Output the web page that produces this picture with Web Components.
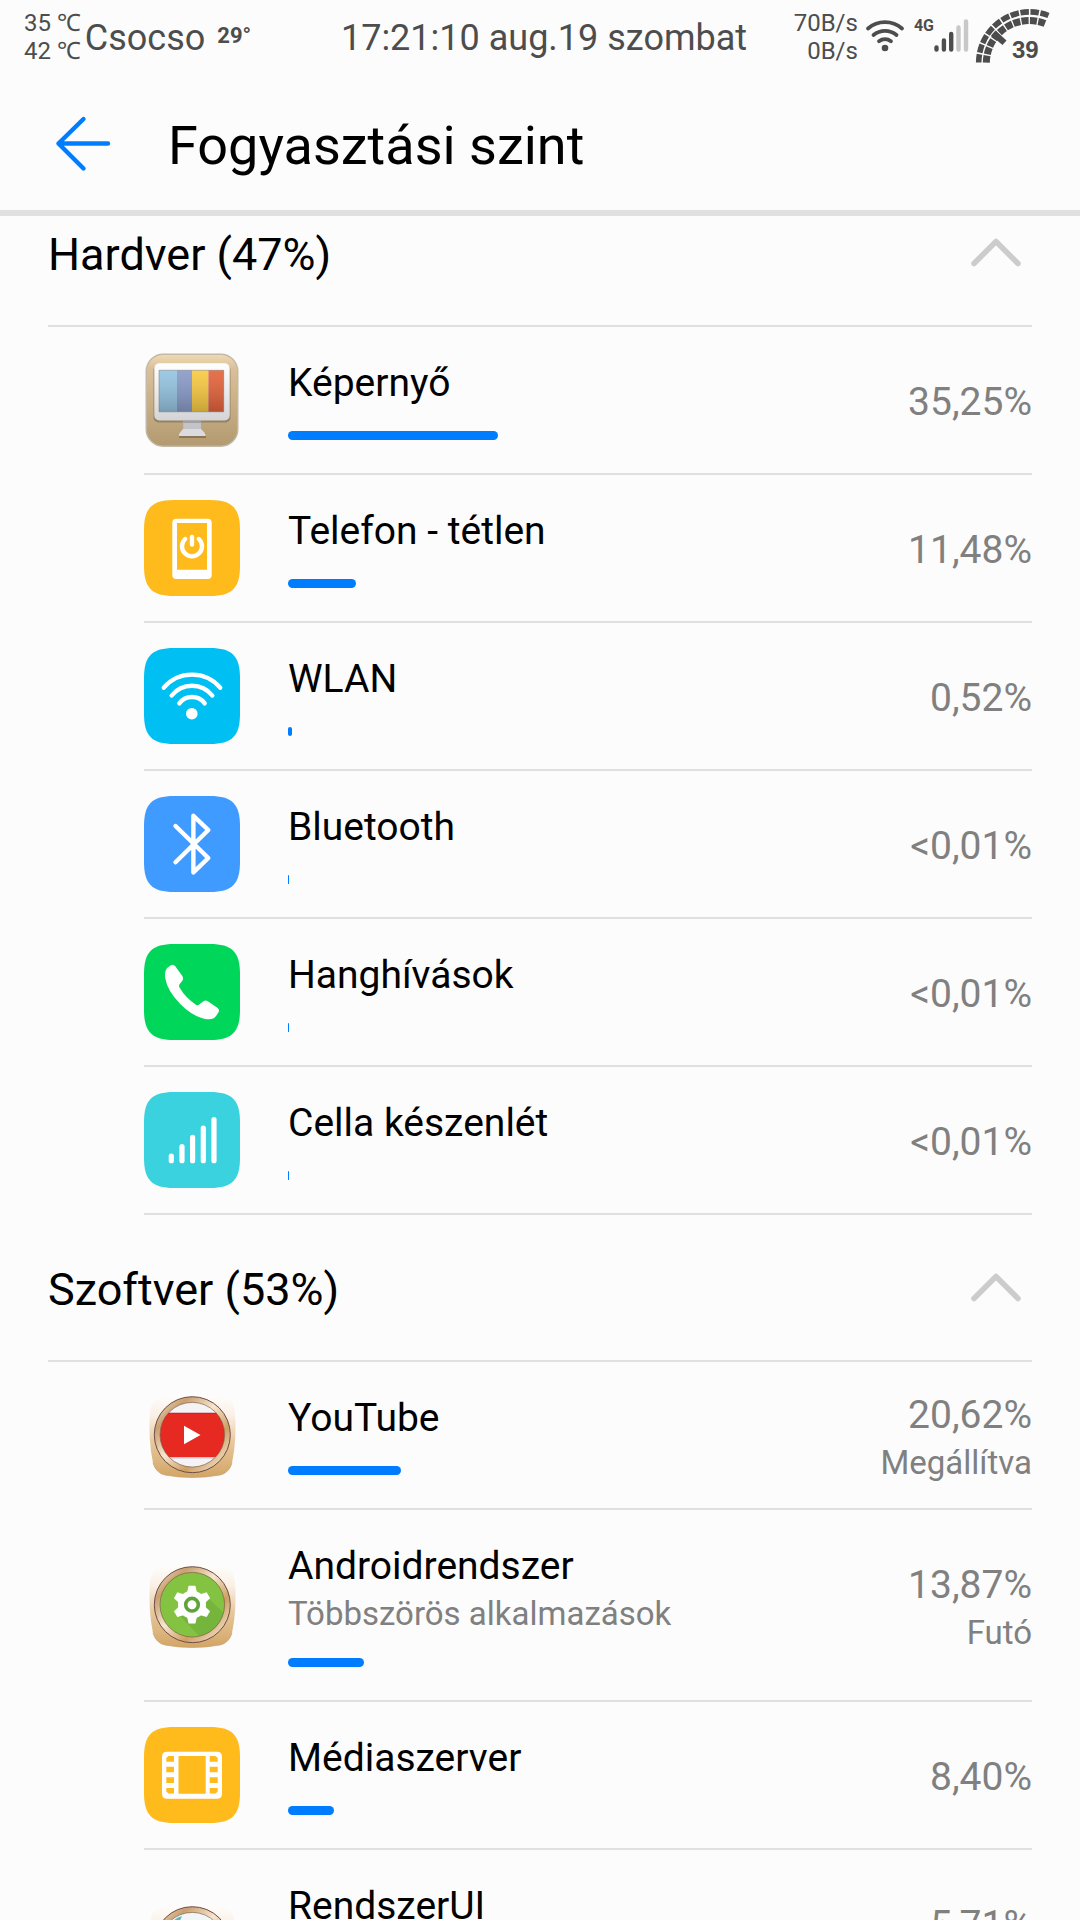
<!DOCTYPE html>
<html lang="hu">
<head>
<meta charset="utf-8">
<meta name="viewport" content="width=device-width, initial-scale=1">
<title>Fogyasztási szint</title>
<style>
    body{
        margin: 0;
        height: 100vh;
        overflow: hidden;
        display: flex;
        flex-direction: column;
        background: #fcfcfc;
        color: #000;
        font-family: Roboto, "Noto Sans", sans-serif;
    }

    status-bar, app-bar{
        flex: none;
    }

    main{
        flex: 1;
        min-height: 0;
        overflow: hidden;
    }

    /* the list is scrolled a little under the app bar */
    .list{
        margin-top: -36px;
    }
</style>
</head>
<body>
    <status-bar>
        <span slot="temp">35 ℃</span>
        <span slot="temp">42 ℃</span>
        <span slot="carrier">Csocso</span>
        <span slot="weather">29°</span>
        <span slot="clock">17:21:10 aug.19 szombat</span>
        <span slot="speed">70B/s</span>
        <span slot="speed">0B/s</span>
    </status-bar>
    <app-bar>Fogyasztási szint</app-bar>
    <main>
        <div class="list">
            <usage-section label="Hardver (47%)">
                <usage-row icon="screen" name="Képernyő" value="35,25%" level="35.25"></usage-row>
                <usage-row icon="idle" name="Telefon - tétlen" value="11,48%" level="11.48"></usage-row>
                <usage-row icon="wlan" name="WLAN" value="0,52%" level="0.67"></usage-row>
                <usage-row icon="bluetooth" name="Bluetooth" value="&lt;0,01%" level="0"></usage-row>
                <usage-row icon="call" name="Hanghívások" value="&lt;0,01%" level="0"></usage-row>
                <usage-row icon="cell" name="Cella készenlét" value="&lt;0,01%" level="0"></usage-row>
            </usage-section>
            <usage-section label="Szoftver (53%)" wide>
                <usage-row icon="youtube" name="YouTube" value="20,62%" state="Megállítva" level="20.62"></usage-row>
                <usage-row icon="android" name="Androidrendszer" detail="Többszörös alkalmazások" value="13,87%" state="Futó" level="13.87"></usage-row>
                <usage-row icon="media" name="Médiaszerver" value="8,40%" level="8.4"></usage-row>
                <usage-row icon="systemui" name="RendszerUI" detail="" value="5,71%" state="" level="5.71"></usage-row>
            </usage-section>
        </div>
    </main>

<script>
const TILE = "M0 30C0 8 8 0 30 0H66C88 0 96 8 96 30V66C96 88 88 96 66 96H30C8 96 0 88 0 66Z";

const tile = (color, content) => `<path d="${TILE}" fill="${color}"/>${content}`;

// gold frame with a round window, used by the themed app icons
const framed = (content) => `
    <defs>
        <linearGradient id="body" x1="0" y1="0" x2="0" y2="1">
            <stop offset="0" stop-color="#fffdfb"/>
            <stop offset=".25" stop-color="#faf0e6"/>
            <stop offset=".6" stop-color="#e6c598"/>
            <stop offset="1" stop-color="#d3a566"/>
        </linearGradient>
        <linearGradient id="ring" x1="0" y1="0" x2="1" y2="1">
            <stop offset="0" stop-color="#f3e2cd"/>
            <stop offset=".2" stop-color="#c99f6f"/>
            <stop offset=".45" stop-color="#f6e6d0"/>
            <stop offset=".7" stop-color="#cf9f62"/>
            <stop offset="1" stop-color="#faf0e2"/>
        </linearGradient>
        <clipPath id="window"><circle cx="48.3" cy="47.7" r="32.3"/></clipPath>
    </defs>
    <path d="M15 11Q48 4 82 11Q89 13 91 25Q93 52 88 76Q85 86 76 88Q48 93 21 88Q12 86 9 76Q4 52 6 25Q8 13 15 11Z" fill="url(#body)"/>
    <path d="M9 76Q12 86 21 88Q48 93 76 88Q85 86 88 76" fill="none" stroke="#c9a06b" stroke-width="1" opacity=".7"/>
    <circle cx="48.3" cy="47.7" r="35" fill="#fff" stroke="url(#ring)" stroke-width="6"/>
    <circle cx="48.3" cy="47.7" r="38" fill="none" stroke="#6e4c48" stroke-width="1"/>
    <g clip-path="url(#window)">${content}</g>
    <circle cx="48.3" cy="47.7" r="32.3" fill="none" stroke="#70503a" stroke-width="1" opacity=".6"/>`;

const gearTeeth = [0, 60, 120, 180, 240, 300]
    .map(a => `<path d="M43 36L44.6 28.8H51.4L53 36Z" transform="rotate(${a} 48 47.7)"/>`)
    .join("");

const ICONS = {
    screen: `
        <defs>
            <linearGradient id="case" x1="0" y1="0" x2="0" y2="1">
                <stop offset="0" stop-color="#f0dab4"/>
                <stop offset=".15" stop-color="#d9c19b"/>
                <stop offset="1" stop-color="#b39a70"/>
            </linearGradient>
            <linearGradient id="bezel" x1="0" y1="0" x2="0" y2="1">
                <stop offset="0" stop-color="#fff"/>
                <stop offset="1" stop-color="#d4d4d8"/>
            </linearGradient>
            <linearGradient id="shade" x1="0" y1="0" x2="0" y2="1">
                <stop offset="0" stop-color="#fff" stop-opacity=".15"/>
                <stop offset="1" stop-color="#333" stop-opacity=".25"/>
            </linearGradient>
        </defs>
        <rect x="2.2" y="2.2" width="91.6" height="92" rx="17" fill="url(#case)" stroke="#c4b8a6" stroke-width="1.4"/>
        <rect x="9.5" y="13" width="77" height="57.5" rx="5" fill="#7c6a4c" opacity=".6"/>
        <rect x="10.3" y="11.3" width="75.4" height="57.2" rx="5" fill="url(#bezel)"/>
        <path fill="#8ec1df" d="M15 18.3h18v41.5H15z"/>
        <path fill="#8194c4" d="M33 18.3h15v41.5H33z"/>
        <path fill="#f8c736" d="M48 18.3h16.4v41.5H48z"/>
        <path fill="#e2592f" d="M64.4 18.3h15.3v41.5H64.4z"/>
        <path fill="url(#shade)" stroke="#777" stroke-opacity=".5" d="M15 18.3h64.7v41.5H15z"/>
        <path fill="#6d5c42" opacity=".6" d="M36 81H62V86H35Z"/>
        <path fill="#c4c4c8" d="M39.3 68.5H57V77H39.3Z"/>
        <path fill="#a2a2a6" d="M39.3 68.5H57V71H39.3Z"/>
        <path fill="#dcdce0" d="M39 77H57L61.7 82V84H35V82Z"/>`,
    idle: tile("#ffba1c", `
        <path fill="#fff" fill-rule="evenodd" d="M32.3 18.7H63.7Q67.7 18.7 67.7 22.7V75Q67.7 79 63.7 79H32.3Q28.3 79 28.3 75V22.7Q28.3 18.7 32.3 18.7ZM33 23V69.7H63V23Z"/>
        <path fill="none" stroke="#fff" stroke-width="4.4" stroke-linecap="round" d="M41.2 39A10 10 0 1 0 54.8 39M48 37V44.5"/>`),
    wlan: tile("#00c0f3", `
        <circle cx="47.8" cy="65.7" r="5.8" fill="#fff"/>
        <path fill="none" stroke="#fff" stroke-width="4.4" stroke-linecap="round" d="M19.8 39.7A37 37 0 0 1 76.2 39.7M27.7 47.5A26 26 0 0 1 68.3 47.5M35.3 55.3A16 16 0 0 1 60.7 55.3"/>`),
    bluetooth: tile("#3f9bff", `
        <path fill="none" stroke="#fff" stroke-width="4.4" stroke-linecap="round" stroke-linejoin="round" d="M31.5 30L64.3 62L49.4 76.4V19.8L64.3 34L31.5 66.3"/>`),
    call: tile("#00d65a", `
        <path fill="#fff" d="M26.5 21.4Q29.3 19.8 31.3 22.3L38.3 32Q39.9 34.4 38.3 36.8L35.4 40.6Q34.7 42 35.5 43.5Q42 54.5 52.3 60.9Q53.8 61.6 55.2 60.5L59.5 57.3Q61.6 55.9 63.8 57.3L73.7 64Q75.9 65.9 74.5 68.3Q72.2 72.5 69.7 74.3Q66 76 60 74.7Q47.5 71.5 36 59.7Q23.5 47 21.3 34.5Q20.5 30 21.7 26.5Q23.2 23 26.5 21.4Z"/>`),
    cell: tile("#39d2de", `
        <path fill="none" stroke="#fff" stroke-width="5.2" stroke-linecap="round" d="M27.3 64V68.7M38 54.6V68.7M48.6 45.3V68.7M59.3 36V68.7M70 27.6V68.7"/>`),
    media: tile("#ffba1c", `
        <path fill="#fff" fill-rule="evenodd" d="M23 24.7H73Q78 24.7 78 29.7V66.7Q78 71.7 73 71.7H23Q18 71.7 18 66.7V29.7Q18 24.7 23 24.7ZM34.5 29V66.7H61.7V29Z"/>
        <path fill="#ffba1c" d="M24.5 29H30V34.7H22.3V31ZM22.3 39.7H30V45.3H22.3ZM22.3 50.3H30V56H22.3ZM22.3 61H30V66.5H24.5L22.3 64.5ZM65.7 29H71.5L73.7 31V34.7H65.7ZM65.7 39.7H73.7V45.3H65.7ZM65.7 50.3H73.7V56H65.7ZM65.7 61H73.7V64.5L71.5 66.5H65.7Z"/>`),
    youtube: framed(`
        <path fill="#f4f4f6" d="M10 10H88V86H10z"/>
        <path fill="#aaa" opacity=".6" d="M10 10H88V19Q48 10 10 19Z"/>
        <path fill="#e62a22" d="M10 26H88V70H10z"/>
        <path fill="#b9201b" opacity=".5" d="M10 25.5H88V27H10z"/>
        <path fill="#a9a9b2" opacity=".6" d="M10 70H88V71.5H10z"/>
        <path fill="#fff" d="M40 38.7L56.5 48L40 57.2Z"/>`),
    android: framed(`
        <path fill="#83c341" d="M10 10H88V86H10z"/>
        <path fill="#6aa838" opacity=".5" d="M36 59L60 84L86 62L63 40Z"/>
        <g fill="#fff"><circle cx="48" cy="47.7" r="14"/>${gearTeeth}</g>
        <circle cx="48" cy="47.7" r="6.3" fill="none" stroke="#5fa43a" stroke-width="3.6"/>`),
    systemui: framed(`
        <path fill="#f2f6f8" d="M10 10H88V86H10z"/>
        <path fill="#5cb8bd" d="M24 30Q30 21 38 19L34 28Z"/>`)
};

class AppIcon extends HTMLElement
{
    constructor()
    {
        super();
        this.attachShadow({mode: "open"});
    }

    getStyles()
    {
        return `
        <style>
            :host{
                display: block;
                width: 96px;
                height: 96px;
            }

            svg{
                display: block;
                width: 100%;
                height: 100%;
            }
        </style>
        `
    }

    connectedCallback()
    {
        this.shadowRoot.innerHTML = `
            ${this.getStyles()}
            <svg viewBox="0 0 96 96" aria-hidden="true">${ICONS[this.getAttribute("type")]}</svg>
        `;
    }
}
customElements.define("app-icon", AppIcon);

class StatusBar extends HTMLElement
{
    constructor()
    {
        super();
        this.attachShadow({mode: "open"});
    }

    getStyles()
    {
        return `
        <style>
            :host{
                display: grid;
                grid-template-columns: 1fr auto 1fr;
                align-items: center;
                height: 72px;
                padding: 0 16px 0 24px;
                box-sizing: border-box;
                color: #4d4d4d;
                font-size: 36px;
                line-height: 48px;
                white-space: nowrap;
            }

            .group{
                display: flex;
                align-items: center;
            }

            .end{
                justify-content: flex-end;
            }

            .stack{
                display: flex;
                flex-direction: column;
                padding-top: 2px;
                font-size: 24px;
                line-height: 28px;
            }

            .speed{
                text-align: right;
            }

            .carrier, .clock{
                padding-top: 4px;
            }

            .carrier{
                margin: 0 12px 0 4px;
            }

            .weather{
                font-size: 22px;
                font-weight: bold;
            }

            svg{
                display: block;
                flex: none;
            }

            .wifi{
                margin: 0 8px 0 6px;
            }

            .net{
                align-self: flex-start;
                padding-top: 14px;
                font-size: 16px;
                font-weight: bold;
                line-height: 24px;
            }
        </style>
        `
    }

    getTemplate()
    {
        return `
            ${this.getStyles()}
            <div class="group">
                <div class="stack"><slot name="temp"></slot></div>
                <div class="carrier"><slot name="carrier"></slot></div>
                <div class="weather"><slot name="weather"></slot></div>
            </div>
            <div class="clock"><slot name="clock"></slot></div>
            <div class="group end">
                <div class="stack speed"><slot name="speed"></slot></div>
                <svg class="wifi" width="42" height="72" viewBox="0 0 42 72" fill="none" stroke="currentColor" stroke-width="3.8" stroke-linecap="round">
                    <path d="M4 28.5A26 26 0 0 1 38 28.5M9.5 35A18 18 0 0 1 32.5 35M15 41.2A10 10 0 0 1 27 41.2"/>
                    <circle cx="21" cy="48" r="3.3" fill="currentColor" stroke="none"/>
                </svg>
                <div class="net">4G</div>
                <svg width="36" height="72" viewBox="0 0 36 72" fill="none" stroke="currentColor" stroke-width="4.4" stroke-linecap="round">
                    <path d="M2.5 47.5V49.5M9.9 40.5V49.5M17.2 34V49.5"/>
                    <path stroke="#c8c8c8" d="M24.5 27.5V49.5M32 21.5V49.5"/>
                </svg>
                <svg width="94" height="72" viewBox="-6 0 94 72" fill="none" stroke="currentColor">
                    <path d="M2.7 62.6A51 51 0 0 1 72.5 15.5" stroke-width="5.6" pathLength="100" stroke-dasharray="8.6 1.55"/>
                    <path d="M10.3 62.6A43 43 0 0 1 69 23.5" stroke-width="7" pathLength="100" stroke-dasharray="8.6 1.55"/>
                    <path d="M19.5 30.5L15 35.5L26.5 45L30.5 40.5Z" fill="currentColor" stroke="none"/>
                    <text x="36" y="58" font-family="Liberation Sans, sans-serif" font-size="24" font-weight="bold" fill="currentColor" stroke="none">39</text>
                </svg>
            </div>
        `
    }

    connectedCallback()
    {
        this.shadowRoot.innerHTML = this.getTemplate();
    }
}
customElements.define("status-bar", StatusBar);

class AppBar extends HTMLElement
{
    constructor()
    {
        super();
        this.attachShadow({mode: "open"});
    }

    getStyles()
    {
        return `
        <style>
            :host{
                position: relative;
                z-index: 1;
                display: flex;
                align-items: center;
                gap: 48px;
                height: 144px;
                box-sizing: border-box;
                padding: 6px 48px 0;
                background: #fcfcfc;
                border-bottom: 6px solid #e0e0e0;
            }

            button{
                border: 0;
                padding: 0;
                background: none;
                color: #007dff;
            }

            svg{
                display: block;
            }

            h1{
                margin: 0;
                padding-top: 4px;
                font-size: 54px;
                line-height: 72px;
                font-weight: 400;
            }
        </style>
        `
    }

    connectedCallback()
    {
        this.shadowRoot.innerHTML = `
            ${this.getStyles()}
            <button type="button" aria-label="Vissza">
                <svg width="72" height="72" viewBox="0 0 72 72" fill="none" stroke="currentColor" stroke-width="4.4" stroke-linecap="round" stroke-linejoin="round">
                    <path d="M35.5 11L10.500 35.5L35.5 60.5M10.500 35.5H60"/>
                </svg>
            </button>
            <h1><slot></slot></h1>
        `;
    }
}
customElements.define("app-bar", AppBar);

class UsageSection extends HTMLElement
{
    constructor()
    {
        super();
        this.attachShadow({mode: "open"});
    }

    getStyles()
    {
        return `
        <style>
            :host{
                display: block;
                padding: 0 48px;
                --value-width: 148px;
            }

            :host([wide]){
                --value-width: 196px;
            }

            h2{
                margin: 0;
                font: inherit;
            }

            button{
                display: flex;
                align-items: center;
                justify-content: space-between;
                width: 100%;
                height: 147px;
                padding: 0;
                border: 0;
                border-bottom: 2px solid #e0e0e0;
                background: none;
                color: inherit;
                font: inherit;
                font-size: 45px;
                line-height: 60px;
            }

            span{
                padding-top: 4px;
            }

            svg{
                display: block;
            }

            .rows{
                padding-left: 96px;
            }
        </style>
        `
    }

    connectedCallback()
    {
        this.shadowRoot.innerHTML = `
            ${this.getStyles()}
            <h2>
                <button type="button" aria-expanded="true">
                    <span>${this.getAttribute("label")}</span>
                    <svg width="72" height="72" viewBox="0 0 72 72" fill="none" stroke="#ccc" stroke-width="5.5" stroke-linecap="round" stroke-linejoin="round">
                        <path d="M14 46.5L36 24.500L58 46.5"/>
                    </svg>
                </button>
            </h2>
            <div class="rows"><slot></slot></div>
        `;
    }
}
customElements.define("usage-section", UsageSection);

class UsageRow extends HTMLElement
{
    constructor()
    {
        super();
        this.attachShadow({mode: "open"});
    }

    getStyles()
    {
        return `
        <style>
            :host{
                display: grid;
                grid-template-columns: 96px 1fr var(--value-width);
                align-items: center;
                border-bottom: 2px solid #e0e0e0;
                font-size: 39px;
            }

            .info{
                padding: 30px 0 33px 48px;
            }

            .name{
                line-height: 52px;
            }

            .detail{
                height: 44px;
                line-height: 44px;
                font-size: 33px;
                color: #808080;
            }

            .bar{
                width: var(--level);
                min-width: 1px;
                height: 9px;
                margin-top: 22px;
                border-radius: 5px;
                background: #007dff;
            }

            .value{
                padding-top: 4px;
                text-align: right;
                line-height: 48px;
                color: #808080;
            }

            :host([state]) .value{
                padding-top: 8px;
            }

            .state{
                height: 48px;
                font-size: 33px;
            }
        </style>
        `
    }

    getTemplate()
    {
        const name = this.getAttribute("name");
        const detail = this.getAttribute("detail");
        const state = this.getAttribute("state");
        const level = this.getAttribute("level");
        return `
            ${this.getStyles()}
            <app-icon type="${this.getAttribute("icon")}"></app-icon>
            <div class="info">
                <div class="name">${name}</div>
                ${detail === null ? "" : `<div class="detail">${detail}</div>`}
                <div class="bar" role="meter" aria-label="${name}" aria-valuenow="${level}" style="--level: ${level}%"></div>
            </div>
            <div class="value">
                <div>${this.getAttribute("value").replace("<", "&lt;")}</div>
                ${state === null ? "" : `<div class="state">${state}</div>`}
            </div>
        `
    }

    connectedCallback()
    {
        this.shadowRoot.innerHTML = this.getTemplate();
    }
}
customElements.define("usage-row", UsageRow);
</script>
</body>
</html>
